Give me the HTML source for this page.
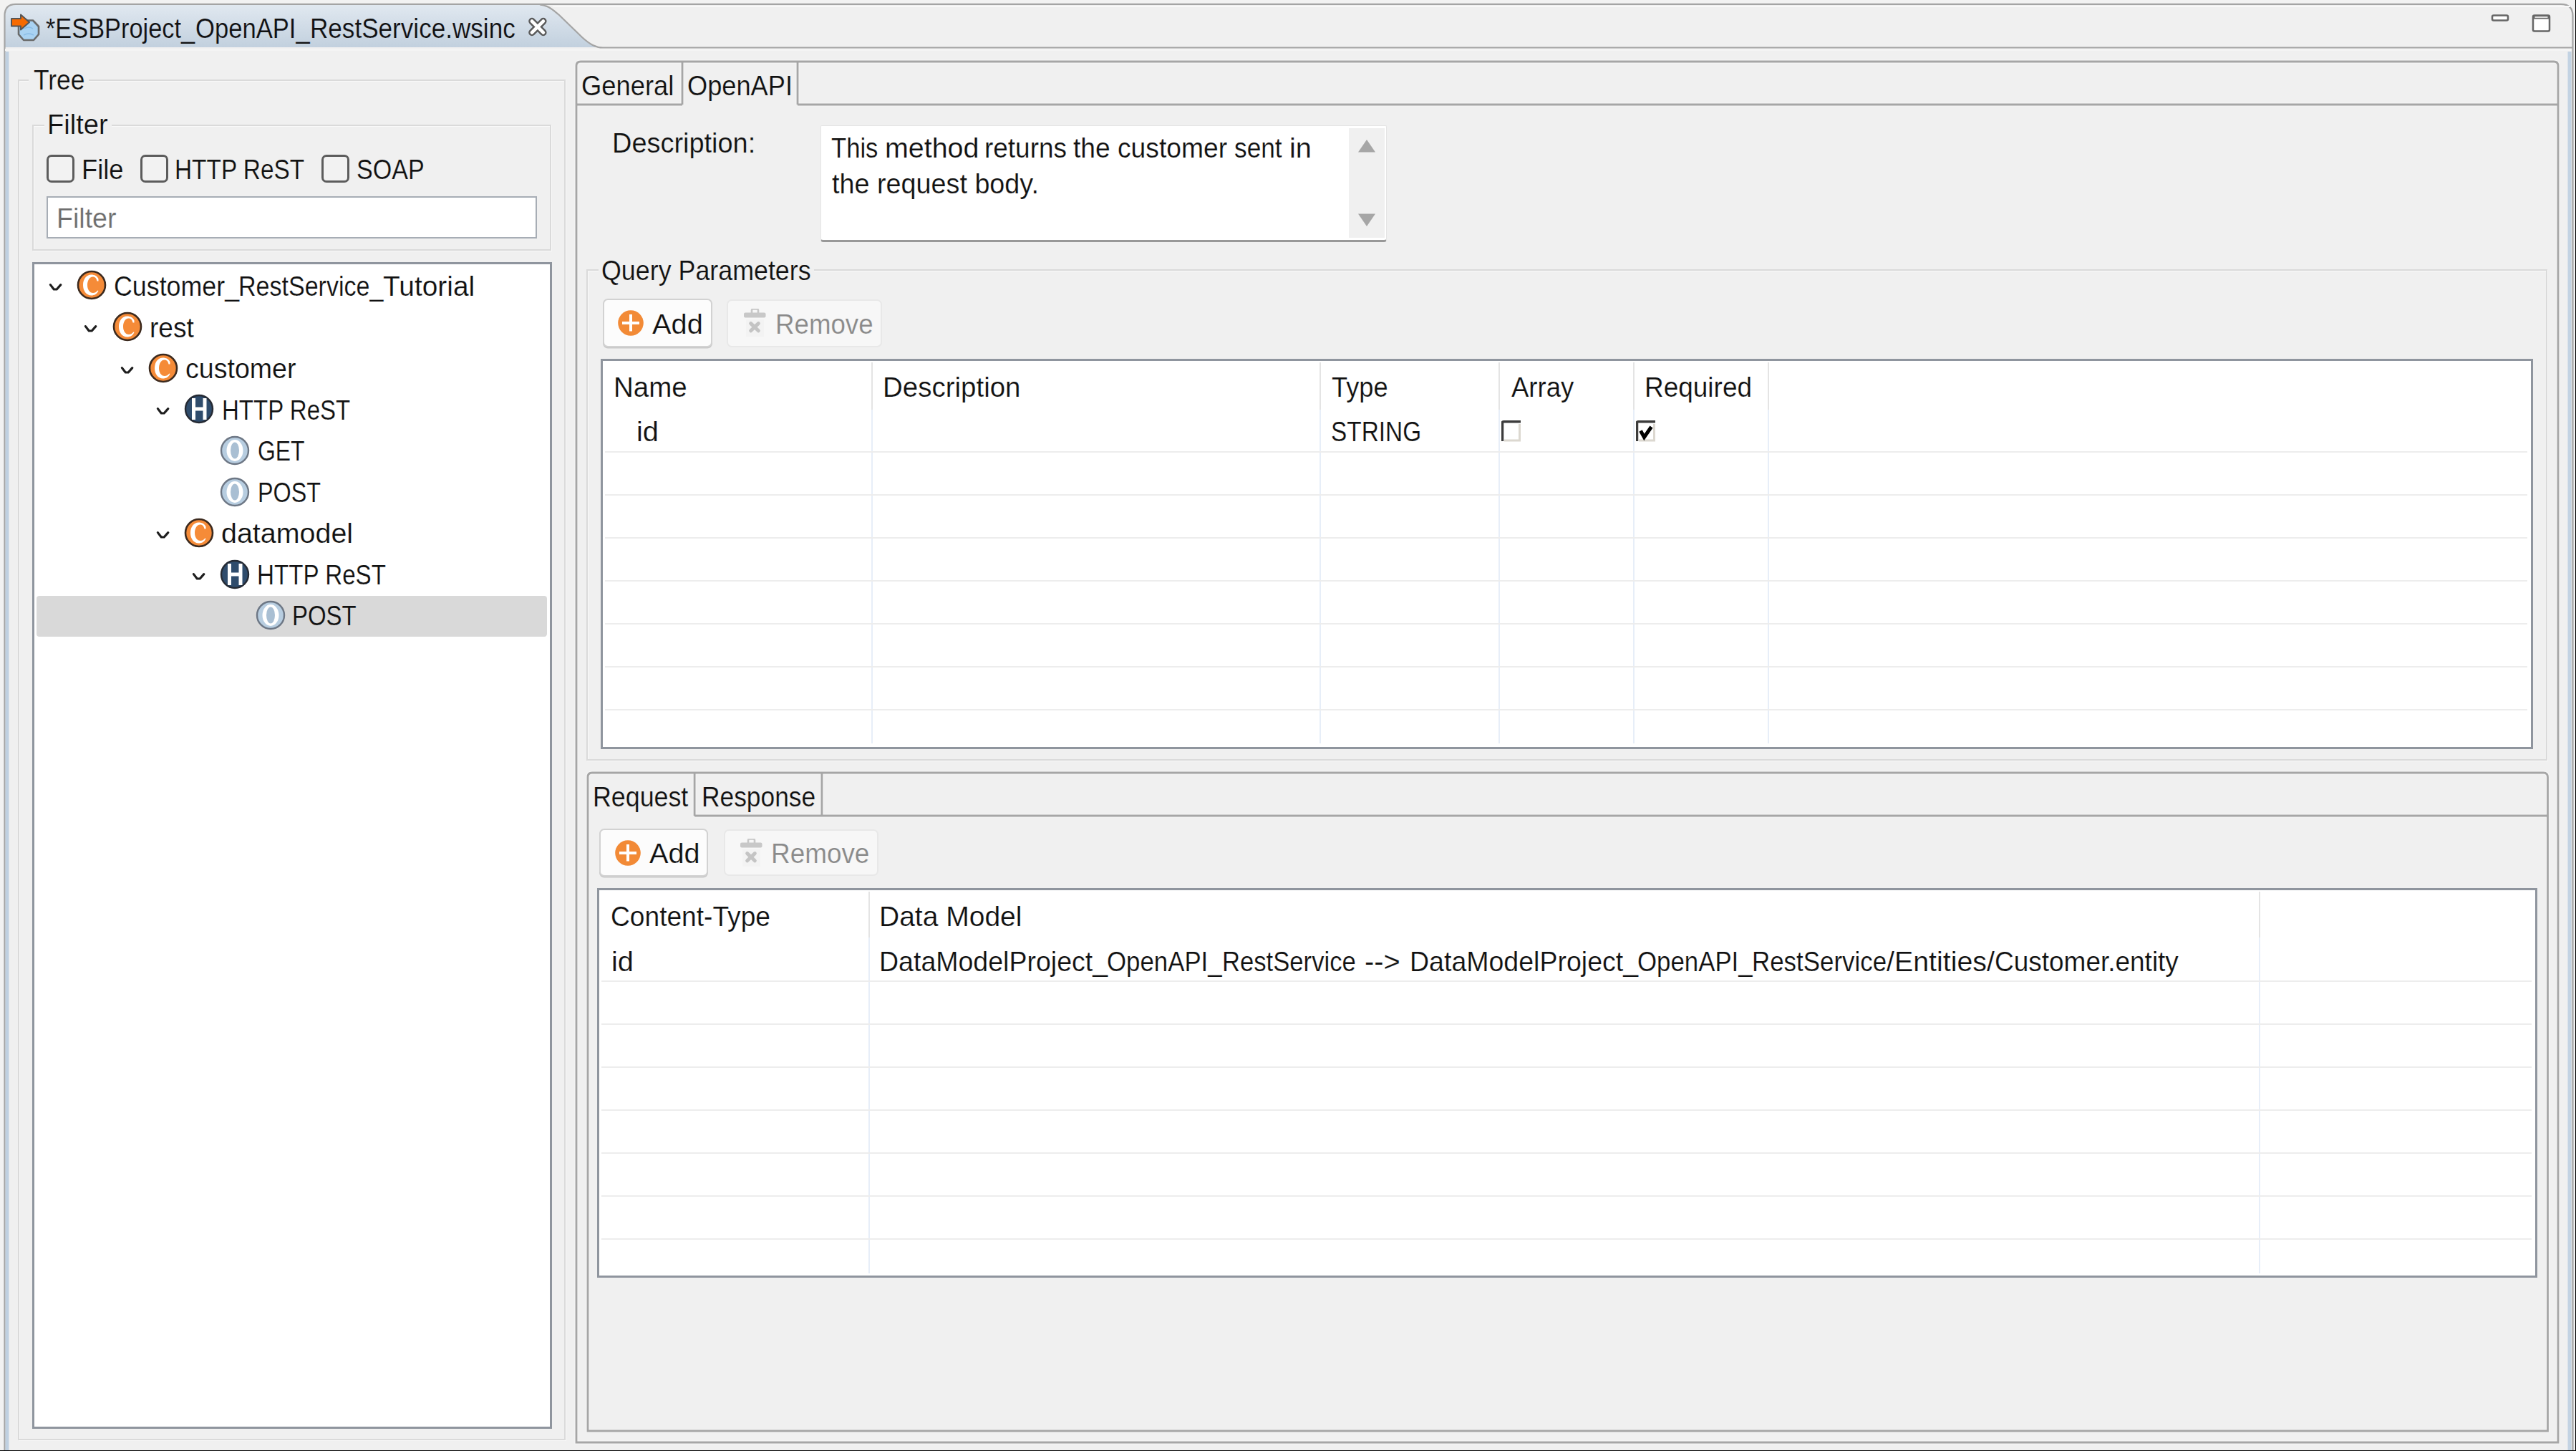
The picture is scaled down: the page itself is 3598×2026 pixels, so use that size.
<!DOCTYPE html>
<html><head><meta charset='utf-8'><style>
html,body{margin:0;padding:0;width:3598px;height:2026px;overflow:hidden;background:#f0f0f0}
.t{position:absolute;font-family:"Liberation Sans",sans-serif;font-size:39px;line-height:1;white-space:pre;transform-origin:0 0}
</style></head><body>
<svg style='position:absolute;left:0;top:0' width='3598' height='2026' viewBox='0 0 3598 2026'>
<defs><linearGradient id='tabg' x1='0' y1='0' x2='0' y2='1'>
<stop offset='0' stop-color='#e0e8f0'/><stop offset='1' stop-color='#c2d0de'/></linearGradient></defs>
<rect x='0' y='0' width='3598' height='2026' fill='#f2f2f2'/>
<path d='M6,2030 L6,22 Q6,6 22,6 L3577,6 Q3593,6 3593,22 L3593,2030 Z' fill='#f0f0f0'/>
<path d='M7,66 L7,22 Q7,7 22,7 L754,7 C766,8 770,12 780,20 L813,52 C824,62 832,66 842,66 Z' fill='url(#tabg)'/>
<path d='M6.5,2030 L6.5,22 Q6.5,5.8 22,5.8 L3577,5.8 Q3593.5,5.8 3593.5,22 L3593.5,2030' fill='none' stroke='#a4a4a4' stroke-width='2.2'/>
<path d='M754,6.5 C766,8 770,12 780,20 L813,52 C824,62 832,66.5 842,66.5 L3593,66.5' fill='none' stroke='#a4a4a4' stroke-width='2.2'/>
<rect x='772' y='8' width='2818' height='2' fill='#f8f8f8'/>
<rect x='7' y='68' width='3585' height='3' fill='#f4f4f4'/>
<rect x='7.6' y='72' width='4.8' height='1960' fill='#bfd0e1'/>
<rect x='3586.5' y='72' width='5' height='1960' fill='#c3d3e3'/>
</svg>
<svg style='position:absolute;left:3470px;top:12px' width='110' height='45' viewBox='3470 12 110 45'>
<rect x='3481' y='21.5' width='22' height='7' rx='2' fill='#fff' stroke='#666' stroke-width='2.5'/>
<rect x='3538' y='21.5' width='23' height='22' rx='2' fill='#fff' stroke='#666' stroke-width='2.5'/>
<rect x='3538' y='21.5' width='23' height='5' fill='#666'/>
<rect x='3540.5' y='23' width='18' height='2' fill='#ddd'/>
</svg>
<svg style='position:absolute;left:10px;top:15px' width='50' height='46' viewBox='10 15 50 46'>
<path d='M33,28.5 L46,28.5 L54,37 L54,48 L47,56 L33,56 L26,48 L26,37 Z' fill='#a9d2f2' stroke='#6a6a6a' stroke-width='2.6' stroke-linejoin='round'/>
<path d='M34,40 Q40,36 46,40 M33,49 Q40,45 47,49' fill='none' stroke='#8bbde6' stroke-width='1.5'/>
<path d='M16,26 L29,26 L29,20.5 L41,31 L29,41.5 L29,36.5 L16,36.5 Z' fill='#f76a00' stroke='#555' stroke-width='2' stroke-linejoin='round'/>
</svg>
<!-- closeX --><svg style='position:absolute;left:730px;top:16px' width='42' height='42' viewBox='730 16 42 42'>
<path d='M743,29.6 L758.8,45.4 M758.8,29.6 L743,45.4' stroke='#5a5a5a' stroke-width='9.6' stroke-linecap='round'/>
<path d='M743,29.6 L758.8,45.4 M758.8,29.6 L743,45.4' stroke='#fff' stroke-width='4.8' stroke-linecap='round'/>
</svg>
<div style='position:absolute;left:25px;top:111px;width:765px;height:1900px;border:2px solid #dadada;box-sizing:border-box;box-shadow:inset 1px 1px 0 #f9f9f9, 1px 1px 0 #f9f9f9'></div>
<div style='position:absolute;left:40px;top:109px;width:84px;height:6px;background:#f0f0f0'></div>
<div style='position:absolute;left:45px;top:174px;width:725px;height:176px;border:2px solid #dadada;box-sizing:border-box;box-shadow:inset 1px 1px 0 #f9f9f9, 1px 1px 0 #f9f9f9'></div>
<div style='position:absolute;left:62px;top:172px;width:94px;height:6px;background:#f0f0f0'></div>
<div style='position:absolute;left:65px;top:216px;width:39px;height:39px;border:3px solid #5c5c5c;border-radius:7px;box-sizing:border-box;background:#f2f2f2'></div>
<div style='position:absolute;left:195.5px;top:216px;width:39px;height:39px;border:3px solid #5c5c5c;border-radius:7px;box-sizing:border-box;background:#f2f2f2'></div>
<div style='position:absolute;left:449px;top:216px;width:39px;height:39px;border:3px solid #5c5c5c;border-radius:7px;box-sizing:border-box;background:#f2f2f2'></div>
<div style='position:absolute;left:65px;top:274px;width:685px;height:59px;border:2px solid #a7adb5;box-sizing:border-box;background:#fff'></div>
<div style='position:absolute;left:45px;top:365.5px;width:726px;height:1629.5px;border:3px solid #8f959e;box-sizing:border-box;background:#fff'></div>
<div style='position:absolute;left:51px;top:832px;width:713px;height:57px;background:#d9d9d9;border-radius:4px'></div>
<svg style='position:absolute;left:64.5px;top:392px' width='26' height='18' viewBox='64.5 392 26 18'>
<path d='M69.9,397.6 L74.8,404 L78.7,404 L84.3,397.6' fill='none' stroke='#1e1e1e' stroke-width='3.2' stroke-linejoin='round' stroke-linecap='round'/>
</svg>
<svg style='position:absolute;left:105.5px;top:376px' width='44' height='44' viewBox='-22 -22 44 44'>
<circle r='19' fill='#f58b38' stroke='#3c2a1e' stroke-width='2.6'/>
<path d='M9.5,-8.5 C8,-12.5 4,-14.5 -0.5,-14.5 C-7.5,-14.5 -12,-8 -12,0 C-12,8 -7.5,14.5 -0.5,14.5 C4,14.5 7.5,12.5 9.5,8 L8.5,7.5 C6.5,10 4.5,11 2,11 C-3,11 -6,6 -6,0 C-6,-6 -3,-11.5 1.5,-11.5 C4.5,-11.5 6.5,-10 7.5,-5.5 L9.5,-5.5 Z' fill='#fff'/>
</svg>
<svg style='position:absolute;left:114px;top:450px' width='26' height='18' viewBox='114 450 26 18'>
<path d='M119.4,455.6 L124.3,462 L128.2,462 L133.8,455.6' fill='none' stroke='#1e1e1e' stroke-width='3.2' stroke-linejoin='round' stroke-linecap='round'/>
</svg>
<svg style='position:absolute;left:156px;top:434px' width='44' height='44' viewBox='-22 -22 44 44'>
<circle r='19' fill='#f58b38' stroke='#3c2a1e' stroke-width='2.6'/>
<path d='M9.5,-8.5 C8,-12.5 4,-14.5 -0.5,-14.5 C-7.5,-14.5 -12,-8 -12,0 C-12,8 -7.5,14.5 -0.5,14.5 C4,14.5 7.5,12.5 9.5,8 L8.5,7.5 C6.5,10 4.5,11 2,11 C-3,11 -6,6 -6,0 C-6,-6 -3,-11.5 1.5,-11.5 C4.5,-11.5 6.5,-10 7.5,-5.5 L9.5,-5.5 Z' fill='#fff'/>
</svg>
<svg style='position:absolute;left:164.5px;top:507.5px' width='26' height='18' viewBox='164.5 507.5 26 18'>
<path d='M169.9,513.1 L174.8,519.5 L178.7,519.5 L184.3,513.1' fill='none' stroke='#1e1e1e' stroke-width='3.2' stroke-linejoin='round' stroke-linecap='round'/>
</svg>
<svg style='position:absolute;left:205.5px;top:491.5px' width='44' height='44' viewBox='-22 -22 44 44'>
<circle r='19' fill='#f58b38' stroke='#3c2a1e' stroke-width='2.6'/>
<path d='M9.5,-8.5 C8,-12.5 4,-14.5 -0.5,-14.5 C-7.5,-14.5 -12,-8 -12,0 C-12,8 -7.5,14.5 -0.5,14.5 C4,14.5 7.5,12.5 9.5,8 L8.5,7.5 C6.5,10 4.5,11 2,11 C-3,11 -6,6 -6,0 C-6,-6 -3,-11.5 1.5,-11.5 C4.5,-11.5 6.5,-10 7.5,-5.5 L9.5,-5.5 Z' fill='#fff'/>
</svg>
<svg style='position:absolute;left:215px;top:565px' width='26' height='18' viewBox='215 565 26 18'>
<path d='M220.4,570.6 L225.3,577 L229.2,577 L234.8,570.6' fill='none' stroke='#1e1e1e' stroke-width='3.2' stroke-linejoin='round' stroke-linecap='round'/>
</svg>
<svg style='position:absolute;left:256px;top:549px' width='44' height='44' viewBox='-22 -22 44 44'>
<circle r='19' fill='#2f4c6c' stroke='#252a33' stroke-width='2.4'/>
<rect x='-10' y='-15' width='5' height='30' fill='#fff'/>
<rect x='5.5' y='-15' width='5' height='30' fill='#fff'/>
<rect x='-6' y='-2.5' width='12' height='5' fill='#fff'/>
</svg>
<svg style='position:absolute;left:306px;top:607px' width='44' height='44' viewBox='-22 -22 44 44'>
<circle r='19' fill='#b7cde0' stroke='#6d7785' stroke-width='2.4'/>
<ellipse rx='11.5' ry='15' fill='#fff'/>
<ellipse rx='6' ry='11.5' fill='#a9bfd3'/>
</svg>
<svg style='position:absolute;left:306px;top:664.5px' width='44' height='44' viewBox='-22 -22 44 44'>
<circle r='19' fill='#b7cde0' stroke='#6d7785' stroke-width='2.4'/>
<ellipse rx='11.5' ry='15' fill='#fff'/>
<ellipse rx='6' ry='11.5' fill='#a9bfd3'/>
</svg>
<svg style='position:absolute;left:215px;top:738px' width='26' height='18' viewBox='215 738 26 18'>
<path d='M220.4,743.6 L225.3,750 L229.2,750 L234.8,743.6' fill='none' stroke='#1e1e1e' stroke-width='3.2' stroke-linejoin='round' stroke-linecap='round'/>
</svg>
<svg style='position:absolute;left:256px;top:722px' width='44' height='44' viewBox='-22 -22 44 44'>
<circle r='19' fill='#f58b38' stroke='#3c2a1e' stroke-width='2.6'/>
<path d='M9.5,-8.5 C8,-12.5 4,-14.5 -0.5,-14.5 C-7.5,-14.5 -12,-8 -12,0 C-12,8 -7.5,14.5 -0.5,14.5 C4,14.5 7.5,12.5 9.5,8 L8.5,7.5 C6.5,10 4.5,11 2,11 C-3,11 -6,6 -6,0 C-6,-6 -3,-11.5 1.5,-11.5 C4.5,-11.5 6.5,-10 7.5,-5.5 L9.5,-5.5 Z' fill='#fff'/>
</svg>
<svg style='position:absolute;left:265px;top:795.5px' width='26' height='18' viewBox='265 795.5 26 18'>
<path d='M270.4,801.1 L275.3,807.5 L279.2,807.5 L284.8,801.1' fill='none' stroke='#1e1e1e' stroke-width='3.2' stroke-linejoin='round' stroke-linecap='round'/>
</svg>
<svg style='position:absolute;left:306px;top:779.5px' width='44' height='44' viewBox='-22 -22 44 44'>
<circle r='19' fill='#2f4c6c' stroke='#252a33' stroke-width='2.4'/>
<rect x='-10' y='-15' width='5' height='30' fill='#fff'/>
<rect x='5.5' y='-15' width='5' height='30' fill='#fff'/>
<rect x='-6' y='-2.5' width='12' height='5' fill='#fff'/>
</svg>
<svg style='position:absolute;left:356px;top:837px' width='44' height='44' viewBox='-22 -22 44 44'>
<circle r='19' fill='#b7cde0' stroke='#6d7785' stroke-width='2.4'/>
<ellipse rx='11.5' ry='15' fill='#fff'/>
<ellipse rx='6' ry='11.5' fill='#a9bfd3'/>
</svg>
<svg style='position:absolute;left:800px;top:81px' width='2778' height='1938' viewBox='800 81 2778 1938'><path d='M805,2014 L805,92 Q805,86 811,86 L3567,86 Q3573,86 3573,92 L3573,2014 Z' fill='none' stroke='#f6f6f6' stroke-width='5'/><path d='M953,146 L953,86 M1114,146 L1114,86 M805,146 L953,146 M1114,146 L3573,146 ' fill='none' stroke='#f6f6f6' stroke-width='5'/><path d='M805,2014 L805,92 Q805,86 811,86 L3567,86 Q3573,86 3573,92 L3573,2014 Z' fill='none' stroke='#a6a6a6' stroke-width='2.8'/><path d='M953,146 L953,86 M1114,146 L1114,86 M805,146 L953,146 M1114,146 L3573,146 ' fill='none' stroke='#a6a6a6' stroke-width='2.8'/></svg>
<div style='position:absolute;left:1146px;top:175px;width:791px;height:163px;background:#fff;border:1px solid #e4e4e4;border-bottom:3px solid #989898;border-radius:2px 2px 4px 4px;box-sizing:border-box'></div>
<div style='position:absolute;left:1884px;top:179px;width:50px;height:153px;background:#f0f0f0'></div>
<svg style='position:absolute;left:1890px;top:190px' width='40' height='130' viewBox='1890 190 40 130'><path d='M1897,212.5 L1909,195 L1921,212.5 Z' fill='#a6a6a6'/><path d='M1897,298.5 L1909,316 L1921,298.5 Z' fill='#a6a6a6'/></svg>
<div style='position:absolute;left:819px;top:376px;width:2739px;height:686px;border:2px solid #dadada;box-sizing:border-box;box-shadow:inset 1px 1px 0 #f9f9f9, 1px 1px 0 #f9f9f9'></div>
<div style='position:absolute;left:836px;top:374px;width:301px;height:6px;background:#f0f0f0'></div>
<div style='position:absolute;left:841.7px;top:416.7px;width:153.5px;height:68.5px;box-sizing:border-box;border:2px solid #d2d2d2;border-radius:7px;background:#fcfcfc;box-shadow:0 1.5px 0 #c8c8c8'></div>
<svg style='position:absolute;left:863px;top:433px' width='36' height='36' viewBox='0 0 36 36'>
<circle cx='18' cy='18' r='17.8' fill='#f28a36'/>
<rect x='6' y='16' width='24' height='4' fill='#fff'/><rect x='16' y='6' width='4' height='23.5' fill='#fff'/>
</svg>
<div style='position:absolute;left:1015px;top:418px;width:217px;height:66.5px;box-sizing:border-box;border:2px solid #e8e8e8;border-radius:7px;background:#f7f7f7'></div>
<svg style='position:absolute;left:1038.5px;top:430.5px' width='32' height='40' viewBox='0 0 32 40'>
<rect x='3' y='15' width='25' height='24' fill='#f3f3f3'/>
<rect x='0' y='5.5' width='30.5' height='7' rx='2' fill='#c8c8c8'/>
<path d='M11,6 L11,2.5 Q11,0.5 13,0.5 L18,0.5 Q20,0.5 20,2.5 L20,6' fill='none' stroke='#c8c8c8' stroke-width='2.6'/>
<path d='M9.7,20.6 L20.3,30.8 M20.3,20.6 L9.7,30.8' stroke='#c4c4c4' stroke-width='5' stroke-linecap='round'/>
</svg>
<div style='position:absolute;left:839px;top:501px;width:2699px;height:544.5px;border:3px solid #8f959e;box-sizing:border-box;background:#fff'></div>
<div style='position:absolute;left:1217px;top:506px;width:2px;height:66px;background:#e4e4e4'></div>
<div style='position:absolute;left:1217px;top:572px;width:2px;height:466px;background:#e7eef8'></div>
<div style='position:absolute;left:1843px;top:506px;width:2px;height:66px;background:#e4e4e4'></div>
<div style='position:absolute;left:1843px;top:572px;width:2px;height:466px;background:#e7eef8'></div>
<div style='position:absolute;left:2092.5px;top:506px;width:2px;height:66px;background:#e4e4e4'></div>
<div style='position:absolute;left:2092.5px;top:572px;width:2px;height:466px;background:#e7eef8'></div>
<div style='position:absolute;left:2280.5px;top:506px;width:2px;height:66px;background:#e4e4e4'></div>
<div style='position:absolute;left:2280.5px;top:572px;width:2px;height:466px;background:#e7eef8'></div>
<div style='position:absolute;left:2469px;top:506px;width:2px;height:66px;background:#e4e4e4'></div>
<div style='position:absolute;left:2469px;top:572px;width:2px;height:466px;background:#e7eef8'></div>
<div style='position:absolute;left:845px;top:630px;width:2685px;height:2px;background:#ededed'></div>
<div style='position:absolute;left:845px;top:690px;width:2685px;height:2px;background:#ededed'></div>
<div style='position:absolute;left:845px;top:750px;width:2685px;height:2px;background:#ededed'></div>
<div style='position:absolute;left:845px;top:810px;width:2685px;height:2px;background:#ededed'></div>
<div style='position:absolute;left:845px;top:870px;width:2685px;height:2px;background:#ededed'></div>
<div style='position:absolute;left:845px;top:930px;width:2685px;height:2px;background:#ededed'></div>
<div style='position:absolute;left:845px;top:990px;width:2685px;height:2px;background:#ededed'></div>
<svg style='position:absolute;left:2097px;top:586.5px' width='28' height='30' viewBox='0 0 28 30'>
<rect x='1' y='1' width='26' height='28' fill='#fff'/>
<path d='M1.5,29 L1.5,3 Q1.5,1.8 3,1.8 L27,1.8' fill='none' stroke='#3c3c3c' stroke-width='3.5'/>
<path d='M25.5,5 L25.5,28 L4,28' fill='none' stroke='#dcd8d0' stroke-width='3'/>

</svg>
<svg style='position:absolute;left:2285px;top:586.5px' width='28' height='30' viewBox='0 0 28 30'>
<rect x='1' y='1' width='26' height='28' fill='#fff'/>
<path d='M1.5,29 L1.5,3 Q1.5,1.8 3,1.8 L27,1.8' fill='none' stroke='#3c3c3c' stroke-width='3.5'/>
<path d='M25.5,5 L25.5,28 L4,28' fill='none' stroke='#dcd8d0' stroke-width='3'/>
<path d='M6.5,14.5 L11.5,23.5 L21.5,9' fill='none' stroke='#000' stroke-width='5' stroke-linejoin='miter'/>
</svg>
<svg style='position:absolute;left:815.5px;top:1074px' width='2747.5' height='929' viewBox='815.5 1074 2747.5 929'><path d='M820.5,1998 L820.5,1085 Q820.5,1079 826.5,1079 L3552,1079 Q3558,1079 3558,1085 L3558,1998 Z' fill='none' stroke='#f6f6f6' stroke-width='5'/><path d='M969.6,1139 L969.6,1079 M1147.4,1139 L1147.4,1079 M969.6,1139 L3558,1139 ' fill='none' stroke='#f6f6f6' stroke-width='5'/><path d='M820.5,1998 L820.5,1085 Q820.5,1079 826.5,1079 L3552,1079 Q3558,1079 3558,1085 L3558,1998 Z' fill='none' stroke='#a6a6a6' stroke-width='2.8'/><path d='M969.6,1139 L969.6,1079 M1147.4,1139 L1147.4,1079 M969.6,1139 L3558,1139 ' fill='none' stroke='#a6a6a6' stroke-width='2.8'/></svg>
<div style='position:absolute;left:837px;top:1156.8px;width:152.2px;height:67.2px;box-sizing:border-box;border:2px solid #d2d2d2;border-radius:7px;background:#fcfcfc;box-shadow:0 1.5px 0 #c8c8c8'></div>
<svg style='position:absolute;left:859px;top:1173px' width='36' height='36' viewBox='0 0 36 36'>
<circle cx='18' cy='18' r='17.8' fill='#f28a36'/>
<rect x='6' y='16' width='24' height='4' fill='#fff'/><rect x='16' y='6' width='4' height='23.5' fill='#fff'/>
</svg>
<div style='position:absolute;left:1011px;top:1158px;width:216px;height:65px;box-sizing:border-box;border:2px solid #e8e8e8;border-radius:7px;background:#f7f7f7'></div>
<svg style='position:absolute;left:1034px;top:1170.5px' width='32' height='40' viewBox='0 0 32 40'>
<rect x='3' y='15' width='25' height='24' fill='#f3f3f3'/>
<rect x='0' y='5.5' width='30.5' height='7' rx='2' fill='#c8c8c8'/>
<path d='M11,6 L11,2.5 Q11,0.5 13,0.5 L18,0.5 Q20,0.5 20,2.5 L20,6' fill='none' stroke='#c8c8c8' stroke-width='2.6'/>
<path d='M9.7,20.6 L20.3,30.8 M20.3,20.6 L9.7,30.8' stroke='#c4c4c4' stroke-width='5' stroke-linecap='round'/>
</svg>
<div style='position:absolute;left:834px;top:1240px;width:2710px;height:544.2px;border:3px solid #8f959e;box-sizing:border-box;background:#fff'></div>
<div style='position:absolute;left:1212.5px;top:1245px;width:2px;height:64px;background:#e4e4e4'></div>
<div style='position:absolute;left:1212.5px;top:1309px;width:2px;height:469px;background:#e7eef8'></div>
<div style='position:absolute;left:3154.6px;top:1245px;width:2px;height:64px;background:#e4e4e4'></div>
<div style='position:absolute;left:3154.6px;top:1309px;width:2px;height:469px;background:#e7eef8'></div>
<div style='position:absolute;left:840px;top:1369px;width:2696px;height:2px;background:#ededed'></div>
<div style='position:absolute;left:840px;top:1429px;width:2696px;height:2px;background:#ededed'></div>
<div style='position:absolute;left:840px;top:1489px;width:2696px;height:2px;background:#ededed'></div>
<div style='position:absolute;left:840px;top:1549px;width:2696px;height:2px;background:#ededed'></div>
<div style='position:absolute;left:840px;top:1609px;width:2696px;height:2px;background:#ededed'></div>
<div style='position:absolute;left:840px;top:1669px;width:2696px;height:2px;background:#ededed'></div>
<div style='position:absolute;left:840px;top:1729px;width:2696px;height:2px;background:#ededed'></div>
<div class='t' style='left:64.42px;top:19.80px;color:#111;-webkit-text-stroke:0.2px #d0dae5;transform:scaleX(0.8809)'>*ESBProject_</div>
<div class='t' style='left:273.42px;top:19.80px;color:#111;-webkit-text-stroke:0.2px #d0dae5;transform:scaleX(0.8877)'>OpenAPI_</div>
<div class='t' style='left:432.70px;top:19.80px;color:#111;-webkit-text-stroke:0.2px #d0dae5;transform:scaleX(0.9000)'>RestService.wsinc</div>
<div class='t' style='left:47.09px;top:92.00px;color:#111;-webkit-text-stroke:0.2px #f0f0f0;transform:scaleX(0.9079)'>Tree</div>
<div class='t' style='left:66.07px;top:154.00px;color:#111;-webkit-text-stroke:0.2px #f0f0f0;transform:scaleX(0.9759)'>Filter</div>
<div class='t' style='left:114.21px;top:216.80px;color:#111;-webkit-text-stroke:0.2px #f0f0f0;transform:scaleX(0.9310)'>File</div>
<div class='t' style='left:243.93px;top:216.80px;color:#111;-webkit-text-stroke:0.2px #f0f0f0;transform:scaleX(0.8558)'>HTTP ReST</div>
<div class='t' style='left:497.85px;top:216.80px;color:#111;-webkit-text-stroke:0.2px #f0f0f0;transform:scaleX(0.8740)'>SOAP</div>
<div class='t' style='left:79.11px;top:285.00px;color:#6e6e6e;-webkit-text-stroke:0.2px #fff;transform:scaleX(0.9639)'>Filter</div>
<div class='t' style='left:158.96px;top:380.30px;color:#111;-webkit-text-stroke:0.2px #fff;transform:scaleX(0.9180)'>Customer_</div>
<div class='t' style='left:333.48px;top:380.30px;color:#111;-webkit-text-stroke:0.2px #fff;transform:scaleX(0.8726)'>RestService_</div>
<div class='t' style='left:534.70px;top:380.30px;color:#111;-webkit-text-stroke:0.2px #fff;transform:scaleX(0.9968)'>Tutorial</div>
<div class='t' style='left:208.75px;top:438.00px;color:#111;-webkit-text-stroke:0.2px #fff;transform:scaleX(0.9516)'>rest</div>
<div class='t' style='left:258.57px;top:494.70px;color:#111;-webkit-text-stroke:0.2px #fff;transform:scaleX(0.9633)'>customer</div>
<div class='t' style='left:310.06px;top:552.80px;color:#111;-webkit-text-stroke:0.2px #fff;transform:scaleX(0.8471)'>HTTP ReST</div>
<div class='t' style='left:359.87px;top:610.30px;color:#111;-webkit-text-stroke:0.2px #fff;transform:scaleX(0.8169)'>GET</div>
<div class='t' style='left:359.81px;top:667.70px;color:#111;-webkit-text-stroke:0.2px #fff;transform:scaleX(0.8294)'>POST</div>
<div class='t' style='left:309.38px;top:725.00px;color:#111;-webkit-text-stroke:0.2px #fff;transform:scaleX(1.0107)'>datamodel</div>
<div class='t' style='left:359.05px;top:783.00px;color:#111;-webkit-text-stroke:0.2px #fff;transform:scaleX(0.8505)'>HTTP ReST</div>
<div class='t' style='left:408.46px;top:840.40px;color:#111;-webkit-text-stroke:0.2px #d9d9d9;transform:scaleX(0.8451)'>POST</div>
<div class='t' style='left:812.13px;top:100.00px;color:#111;-webkit-text-stroke:0.2px #f0f0f0;transform:scaleX(0.9328)'>General</div>
<div class='t' style='left:959.74px;top:100.00px;color:#111;-webkit-text-stroke:0.2px #f0f0f0;transform:scaleX(0.9288)'>OpenAPI</div>
<div class='t' style='left:854.58px;top:180.00px;color:#111;-webkit-text-stroke:0.2px #f0f0f0;transform:scaleX(0.9725)'>Description:</div>
<div class='t' style='left:1160.91px;top:186.80px;color:#111;-webkit-text-stroke:0.2px #fff;transform:scaleX(0.8875)'>This</div>
<div class='t' style='left:1235.57px;top:186.80px;color:#111;-webkit-text-stroke:0.2px #fff;transform:scaleX(1.0104)'>method</div>
<div class='t' style='left:1374.96px;top:186.80px;color:#111;-webkit-text-stroke:0.2px #fff;transform:scaleX(0.9470)'>returns</div>
<div class='t' style='left:1499.25px;top:186.80px;color:#111;-webkit-text-stroke:0.2px #fff;transform:scaleX(0.9538)'>the</div>
<div class='t' style='left:1560.79px;top:186.80px;color:#111;-webkit-text-stroke:0.2px #fff;transform:scaleX(0.9544)'>customer</div>
<div class='t' style='left:1724.10px;top:186.80px;color:#111;-webkit-text-stroke:0.2px #fff;transform:scaleX(0.9041)'>sent</div>
<div class='t' style='left:1800.94px;top:186.80px;color:#111;-webkit-text-stroke:0.2px #fff;transform:scaleX(1.0200)'>in</div>
<div class='t' style='left:1162.43px;top:236.80px;color:#111;-webkit-text-stroke:0.2px #fff;transform:scaleX(0.9680)'>the request body.</div>
<div class='t' style='left:839.86px;top:358.40px;color:#111;-webkit-text-stroke:0.2px #f0f0f0;transform:scaleX(0.9184)'>Query Parameters</div>
<div class='t' style='left:910.60px;top:433.00px;color:#111;-webkit-text-stroke:0.2px #fcfcfc;transform:scaleX(1.0194)'>Add</div>
<div class='t' style='left:1083.08px;top:432.60px;color:#8a8a8a;-webkit-text-stroke:0.2px #f7f7f7;transform:scaleX(0.9404)'>Remove</div>
<div class='t' style='left:857.04px;top:521.00px;color:#111;-webkit-text-stroke:0.2px #fff;transform:scaleX(0.9869)'>Name</div>
<div class='t' style='left:1233.34px;top:521.00px;color:#111;-webkit-text-stroke:0.2px #fff;transform:scaleX(0.9868)'>Description</div>
<div class='t' style='left:1860.07px;top:521.00px;color:#111;-webkit-text-stroke:0.2px #fff;transform:scaleX(0.9293)'>Type</div>
<div class='t' style='left:2111.00px;top:521.00px;color:#111;-webkit-text-stroke:0.2px #fff;transform:scaleX(0.9355)'>Array</div>
<div class='t' style='left:2297.16px;top:521.00px;color:#111;-webkit-text-stroke:0.2px #fff;transform:scaleX(0.9477)'>Required</div>
<div class='t' style='left:888.94px;top:582.50px;color:#111;-webkit-text-stroke:0.2px #fff;transform:scaleX(1.0200)'>id</div>
<div class='t' style='left:1859.29px;top:583.00px;color:#111;-webkit-text-stroke:0.2px #fff;transform:scaleX(0.8559)'>STRING</div>
<div class='t' style='left:828.25px;top:1092.80px;color:#111;-webkit-text-stroke:0.2px #f0f0f0;transform:scaleX(0.9176)'>Request</div>
<div class='t' style='left:980.28px;top:1092.80px;color:#111;-webkit-text-stroke:0.2px #f0f0f0;transform:scaleX(0.9064)'>Response</div>
<div class='t' style='left:906.50px;top:1172.40px;color:#111;-webkit-text-stroke:0.2px #fcfcfc;transform:scaleX(1.0179)'>Add</div>
<div class='t' style='left:1077.36px;top:1172.40px;color:#8a8a8a;-webkit-text-stroke:0.2px #f7f7f7;transform:scaleX(0.9461)'>Remove</div>
<div class='t' style='left:853.10px;top:1260.00px;color:#111;-webkit-text-stroke:0.2px #fff;transform:scaleX(0.9524)'>Content-Type</div>
<div class='t' style='left:1228.00px;top:1260.00px;color:#111;-webkit-text-stroke:0.2px #fff;transform:scaleX(1.0000)'>Data Model</div>
<div class='t' style='left:853.69px;top:1323.00px;color:#111;-webkit-text-stroke:0.2px #fff;transform:scaleX(1.0200)'>id</div>
<div class='t' style='left:1228.11px;top:1323.00px;color:#111;-webkit-text-stroke:0.2px #fff;transform:scaleX(0.9620)'>DataModelProject_</div>
<div class='t' style='left:1546.21px;top:1323.00px;color:#111;-webkit-text-stroke:0.2px #fff;transform:scaleX(0.8927)'>OpenAPI_</div>
<div class='t' style='left:1706.53px;top:1323.00px;color:#111;-webkit-text-stroke:0.2px #fff;transform:scaleX(0.8883)'>RestService</div>
<div class='t' style='left:1906.46px;top:1323.00px;color:#111;-webkit-text-stroke:0.2px #fff;transform:scaleX(1.0200)'>--&gt;</div>
<div class='t' style='left:1968.81px;top:1323.00px;color:#111;-webkit-text-stroke:0.2px #fff;transform:scaleX(0.9620)'>DataModelProject_</div>
<div class='t' style='left:2286.91px;top:1323.00px;color:#111;-webkit-text-stroke:0.2px #fff;transform:scaleX(0.8927)'>OpenAPI_</div>
<div class='t' style='left:2447.22px;top:1323.00px;color:#111;-webkit-text-stroke:0.2px #fff;transform:scaleX(0.8947)'>RestService</div>
<div class='t' style='left:2635.00px;top:1323.00px;color:#111;-webkit-text-stroke:0.2px #fff;transform:scaleX(1.0087)'>/Entities/</div>
<div class='t' style='left:2786.10px;top:1323.00px;color:#111;-webkit-text-stroke:0.2px #fff;transform:scaleX(0.9480)'>Customer.entity</div>
<div style='position:absolute;left:0;top:2025px;width:3598px;height:1px;background:#000'></div>
<div style='position:absolute;left:3597px;top:0;width:1px;height:2026px;background:#000'></div>
</body></html>
